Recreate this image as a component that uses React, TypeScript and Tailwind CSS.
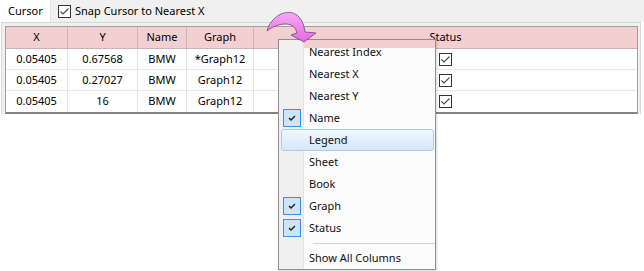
import React from 'react';

const rows = [
  { x: '0.05405', y: '0.67568', name: 'BMW', graph: '*Graph12' },
  { x: '0.05405', y: '0.27027', name: 'BMW', graph: 'Graph12' },
  { x: '0.05405', y: '16', name: 'BMW', graph: 'Graph12' },
];

const menuItems = [
  { label: 'Nearest Index', checked: false },
  { label: 'Nearest X', checked: false },
  { label: 'Nearest Y', checked: false },
  { label: 'Name', checked: true },
  { label: 'Legend', checked: false, hover: true },
  { label: 'Sheet', checked: false },
  { label: 'Book', checked: false },
  { label: 'Graph', checked: true },
  { label: 'Status', checked: true },
];

function SmallCheck() {
  return (
    <span className="w-[13px] h-[13px] border border-[#333333] bg-white flex items-center justify-center">
      <svg width="11" height="11" viewBox="0 0 11 11">
        <polyline points="1.5,5.5 4,8 9.5,2.5" fill="none" stroke="#4a4a4a" strokeWidth="1.1" />
      </svg>
    </span>
  );
}

function MenuCheck() {
  return (
    <span className="w-[18px] h-[18px] border border-[#3d8ee6] bg-[#cce4f7] flex items-center justify-center">
      <svg width="10" height="10" viewBox="0 0 10 10">
        <polyline points="2,5 4,7 8,3" fill="none" stroke="#1b1b1b" strokeWidth="1.3" />
      </svg>
    </span>
  );
}

export default function App() {
  const cols = 'grid grid-cols-[62px_70px_49px_67px_1fr]';
  return (
    <div className="w-[644px] h-[271px] bg-white relative overflow-hidden text-[11px] text-black font-['Noto_Sans',sans-serif]">
      {/* tab strip */}
      <div className="h-[22px] bg-[#f0f0f0] flex items-center">
        <div className="w-[51px] h-[22px] bg-white border-r border-[#e3e3e3] flex items-center pl-[8px]">Cursor</div>
        <div className="flex items-center ml-[7px] gap-[4px]">
          <SmallCheck />
          <span>Snap Cursor to Nearest X</span>
        </div>
      </div>

      {/* panel */}
      <div className="ml-[1px] w-[640px] bg-[#f0f0f0] border-t border-x border-[#d9d9d9] pt-[3px] pl-[3px] pr-[2px]">
        <div className="border-x border-t border-[#a0a0a0] border-b-2 border-b-[#838383] bg-white">
          <div className={`${cols} h-[22px] bg-[#f2d0d2] border-b border-[#c8b4b6]`}>
            {['X', 'Y', 'Name', 'Graph'].map((h) => (
              <div key={h} className="flex items-center justify-center border-r border-[#c9b7b8]">{h}</div>
            ))}
            <div className="flex items-center justify-center">Status</div>
          </div>
          {rows.map((r, i) => (
            <div key={i} className={`${cols} h-[21px] ${i < 2 ? 'border-b border-[#e8e8e8]' : ''}`}>
              <div className="flex items-center justify-center border-r border-[#e3e3e3]">{r.x}</div>
              <div className="flex items-center justify-center border-r border-[#e3e3e3]">{r.y}</div>
              <div className="flex items-center justify-center border-r border-[#e3e3e3]">{r.name}</div>
              <div className="flex items-center justify-center border-r border-[#e3e3e3]">{r.graph}</div>
              <div className="flex items-center justify-center">
                <SmallCheck />
              </div>
            </div>
          ))}
        </div>
      </div>

      {/* context menu */}
      <div className="absolute left-[278px] top-[39px] w-[158px] h-[231px] border border-[#8f8f8f] py-[1px] bg-[linear-gradient(to_right,#f0f0f0_24px,#e2e2e2_24px,#e2e2e2_25px,#fbfbfb_25px)] text-[#111111] shadow-[1px_1px_2px_rgba(0,0,0,0.15)]">
        <div className="absolute left-[25px] right-0 top-0 h-[8px] bg-[#f2d0d2]" />
        {menuItems.map((m) =>
          m.hover ? (
            <div
              key={m.label}
              className="h-[22px] ml-[2px] mr-[1px] rounded-[3px] border border-[#a9cdf0] bg-[linear-gradient(to_bottom,#f1f8fe,#d5e8f9)] flex items-center pl-[1px]"
            >
              <span className="w-[18px]" />
              <span className="ml-[8px]">{m.label}</span>
            </div>
          ) : (
            <div key={m.label} className="h-[22px] flex items-center pl-[4px] relative">
              <span className="w-[18px] flex">{m.checked && <MenuCheck />}</span>
              <span className="ml-[8px]">{m.label}</span>
            </div>
          )
        )}
        <div className="h-[8px] flex items-center pl-[34px]">
          <div className="h-px w-full bg-[#d4d4d4]" />
        </div>
        <div className="h-[22px] flex items-center pl-[30px]">Show All Columns</div>
      </div>

      {/* curved arrow */}
      <svg className="absolute left-[262px] top-[4px]" width="64" height="40" viewBox="0 0 64 40">
        <defs>
          <linearGradient id="arw" x1="0" y1="0" x2="0" y2="1">
            <stop offset="0" stopColor="#f9a8f6" />
            <stop offset="1" stopColor="#e767e6" />
          </linearGradient>
        </defs>
        <path
          d="M5,27 C9,12 24,5 33,10 C39,13 42,20 43,28 L54,29 L42,38 L29,31 L35,29 C34,24 30,20 24,20 C16,20 10,23 5,27 Z"
          fill="url(#arw)"
          stroke="#6e4a6e"
          strokeWidth="0.8"
        />
      </svg>
    </div>
  );
}
